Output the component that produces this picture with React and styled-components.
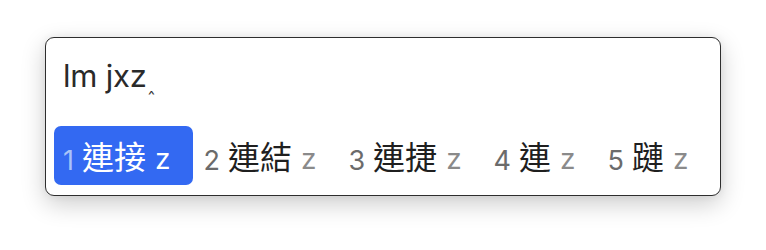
import React from "react";
import styled, { createGlobalStyle } from "styled-components";

const GlobalStyle = createGlobalStyle`
  html, body {
    margin: 0;
    padding: 0;
    background: #ffffff;
  }
`;

const candidates = [
  { num: 1, word: "連接" },
  { num: 2, word: "連結" },
  { num: 3, word: "連捷" },
  { num: 4, word: "連" },
  { num: 5, word: "蹥" },
];

function App() {
  return (
    <Page>
      <GlobalStyle />
      <Panel>
        <InputLine>
          lm jxz<Caret>‸</Caret>
        </InputLine>
        <CandidateRow>
          {candidates.map((c, i) => (
            <Candidate key={c.num} $active={i === 0}>
              <Num $active={i === 0}>{c.num}</Num>
              <Word $active={i === 0}>{c.word}</Word>
              <Code $active={i === 0}>z</Code>
            </Candidate>
          ))}
        </CandidateRow>
      </Panel>
    </Page>
  );
}

const Page = styled.div`
  width: 766px;
  height: 250px;
  box-sizing: border-box;
  padding: 37px 0 0 45px;
  font-family: Inter, "Liberation Sans", "Noto Sans CJK TC", sans-serif;
`;

const Panel = styled.div`
  width: 676px;
  height: 159px;
  box-sizing: border-box;
  border: 1px solid #2e2e2e;
  border-radius: 9px;
  background: #ffffff;
  box-shadow: 0 8px 24px rgba(0, 0, 0, 0.2), 0 0 8px rgba(0, 0, 0, 0.06);
  display: flex;
  flex-direction: column;
`;

const InputLine = styled.div`
  height: 87px;
  padding: 20px 0 0 17px;
  box-sizing: border-box;
  font-size: 31px;
  line-height: 36px;
  letter-spacing: -0.2px;
  color: #2a2a2a;
`;

const Caret = styled.span`
  font-size: 16px;
  position: relative;
  top: 3px;
  margin-left: 1px;
  color: #333;
`;

const CandidateRow = styled.div`
  display: flex;
  align-items: center;
  padding: 1px 0 0 8px;
`;

const Candidate = styled.div`
  display: flex;
  align-items: baseline;
  height: 59px;
  line-height: 59px;
  padding: 0 23px 0 9px;
  margin-right: ${(p) => (p.$active ? "1px" : "0")};
  border-radius: 7px;
  background: ${(p) => (p.$active ? "#3369f2" : "transparent")};
`;

const Num = styled.span`
  color: ${(p) => (p.$active ? "#a9c3f8" : "#6b6b6b")};
  margin-right: 8px;
  font-family: Inter, "Liberation Sans", sans-serif;
  font-size: 27px;
  position: relative;
  top: 1px;
`;

const Word = styled.span`
  color: ${(p) => (p.$active ? "#ffffff" : "#1f1f1f")};
  font-family: "Noto Sans CJK TC", sans-serif;
  font-size: 32px;
  margin-right: 9px;
`;

const Code = styled.span`
  color: ${(p) => (p.$active ? "#ffffff" : "#8a8a8a")};
  font-family: Inter, "Liberation Sans", sans-serif;
  font-size: 28px;
`;

export default App;
